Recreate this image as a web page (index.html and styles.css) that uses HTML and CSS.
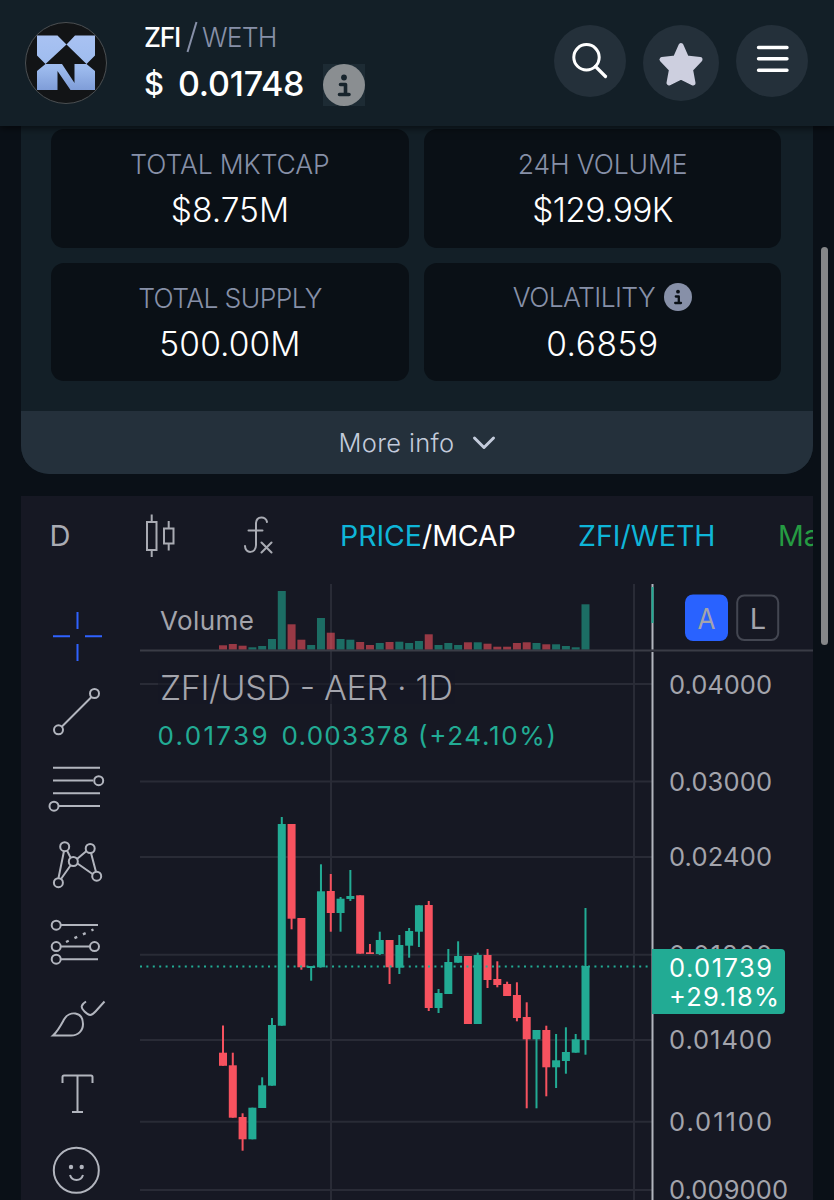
FILE: index.html
```html
<!DOCTYPE html>
<html lang="en">
<head>
<meta charset="utf-8">
<title>ZFI / WETH</title>
<link rel="stylesheet" href="styles.css">
</head>
<body>
<header class="header">
  <svg class="logo" viewBox="0 0 82 82">
    <defs><linearGradient id="lg" gradientUnits="userSpaceOnUse" x1="0" y1="13" x2="0" y2="68"><stop offset="0" stop-color="#a9c2f2"/><stop offset=".6" stop-color="#9dbbee"/><stop offset="1" stop-color="#7f9dd8"/></linearGradient></defs>
    <circle cx="41" cy="41" r="40.5" fill="#121416" stroke="#4b4f52"/>
    <path fill="url(#lg)" d="M12 13.500H32.500L41.500 22.500 20.500 42 12 33.500ZM70 13.500H50L41.500 22.500 61.500 42 70 33.500ZM12 68V49L20.500 42H37L49.500 61V42H61.500L70 49V68H45.500L32.500 49V68Z"/>
  </svg>
  <div class="pair">
    <div class="pair-name"><span class="base">ZFI</span><svg class="slash" viewBox="0 0 12 32"><path d="M10.500 1 1.500 31" stroke="#8790a8" stroke-width="2" fill="none"/></svg><span class="quote">WETH</span></div>
    <div class="pair-price"><span class="dollar">$</span><span class="amount">0.01748</span>
      <svg class="price-info" viewBox="0 0 42 42"><rect width="42" height="42" fill="#1d2b34"/><circle cx="21" cy="21" r="21" fill="#8a8e91"/><circle cx="21" cy="13.500" r="2.900" fill="#17242c"/><path d="M17.500 20.500H22.500V30M16.500 30.500H26" fill="none" stroke="#17242c" stroke-width="3.600" stroke-linecap="round" stroke-linejoin="round"/></svg>
    </div>
  </div>
  <nav class="actions">
    <button class="round"><svg viewBox="0 0 72 72"><circle cx="32.500" cy="32.300" r="12.700" fill="none" stroke="#fff" stroke-width="3"/><path d="M41.500 41.500 51.500 51.500" stroke="#fff" stroke-width="3.200" stroke-linecap="round"/></svg></button>
    <button class="round star"><svg viewBox="0 0 76 76"><path d="M38 20.500 43.500 33 57 34.500 47.500 44.500 50 58 38 52 26 58 28.500 44.500 19 34.500 32.500 33Z" fill="#cdcfdf" stroke="#cdcfdf" stroke-width="5" stroke-linejoin="round"/></svg></button>
    <button class="round"><svg viewBox="0 0 72 72"><path d="M22.500 22.500H51M22.500 33.800H51M22.500 45.200H51" stroke="#fff" stroke-width="3.400" stroke-linecap="round"/></svg></button>
  </nav>
</header>

<main class="content">
  <section class="card">
    <div class="stats">
      <div class="stat"><div class="label">TOTAL MKTCAP</div><div class="value">$8.75M</div></div>
      <div class="stat"><div class="label">24H VOLUME</div><div class="value v2">$129.99K</div></div>
      <div class="stat"><div class="label l3">TOTAL SUPPLY</div><div class="value v3">500.00M</div></div>
      <div class="stat"><div class="label l4">VOLATILITY<svg class="vol-info" viewBox="0 0 28 28"><circle cx="14" cy="14" r="14" fill="#8790a8"/><circle cx="14" cy="8.700" r="1.900" fill="#0a1016"/><path d="M11.800 13.500H14.800V19.500M11.200 20H17" fill="none" stroke="#0a1016" stroke-width="2.300" stroke-linecap="round" stroke-linejoin="round"/></svg></div><div class="value v4">0.6859</div></div>
    </div>
    <button class="more"><span>More info</span><svg viewBox="0 0 24 16"><path d="M2.500 3 12 12.500 21.500 3" fill="none" stroke="#c3cbdb" stroke-width="3" stroke-linecap="round" stroke-linejoin="round"/></svg></button>
  </section>

  <section class="chart">
    <div class="toolbar">
      <svg class="toolbar-icons" viewBox="21 496 300 88" fill="none" stroke="#a9abb3" stroke-width="2">
        <text class="ui" x="49.500" y="546" textLength="21" lengthAdjust="spacingAndGlyphs">D</text>
        <path d="M147 522H156.500V550H147ZM151.700 514.500V522M151.700 550V557M164 528.500H173.500V543.500H164ZM168.700 521V528.500M168.700 543.500V550.500"/>
        <path d="M267 522C266 516 256.500 515.500 256 523V545C256 554 245 554 245 546M248.500 530.500H262.500M261.500 542.500 271.500 552.500M271.500 542.500 261.500 552.500" stroke-linecap="round"/>
      </svg>
      <div class="links"><span class="mode"><b>PRICE</b>/MCAP</span><span class="market">ZFI/WETH</span><span class="maker">Ma</span></div>
    </div>
    <div class="workspace">
      <svg class="tools" viewBox="21 584 119 616" fill="none" stroke="#b2b5be" stroke-width="2">
        <path stroke="#2f62ff" d="M77.500 612V629M77.500 644V661M53 636.300H70M85 636.300H102"/>
        <path d="M61.500 727 91.500 697M53 767.800H100M53 780.600H93M53 793.300H100M59 806H100"/>
        <circle cx="94.500" cy="693.500" r="4.500"/><circle cx="58.500" cy="729.800" r="4.500"/>
        <circle cx="98.700" cy="780.700" r="4.500"/><circle cx="54" cy="806.200" r="4.500"/>
        <path d="M64 851 58.500 878M67 850.500 70.500 857.500M61 879 70.500 865.500M77 859 86.500 851M91 853 96 872M77.500 863.500 92.500 874"/>
        <circle cx="64.700" cy="846.700" r="4.500"/><circle cx="90.200" cy="848.500" r="4.500"/><circle cx="73.300" cy="861.500" r="4.500"/><circle cx="96.700" cy="876.200" r="4.500"/><circle cx="58.400" cy="882.700" r="4.500"/>
        <path d="M61 925H98M61 946.500H90M61 959.200H98"/>
        <path d="M66 942 93.500 929.500" stroke-width="2.400" stroke-dasharray="3 6.300"/>
        <circle cx="56.200" cy="925.200" r="4.500"/><circle cx="56.200" cy="946.600" r="4.500"/><circle cx="94.500" cy="946.600" r="4.500"/><circle cx="56.200" cy="959.200" r="4.500"/>
        <path d="M53 1035.500C58 1031 61 1025 64 1019.500 69 1010.500 83 1011 83 1024 83 1031 78 1035.500 71 1035.500ZM86 1001.500C80.500 1005 80.500 1008 84.500 1011.500 89 1016 91.500 1016 95.500 1011.500L104.500 1001.500"/>
        <path d="M62.500 1083V1077Q62.500 1075.500 64 1075.500H91Q92.500 1075.500 92.500 1077V1083M77.500 1076V1112M72 1112H83"/>
        <circle cx="76.300" cy="1170.300" r="22.500"/><circle cx="71" cy="1167" r="2.200" fill="#b2b5be" stroke="none"/><circle cx="81.700" cy="1167" r="2.200" fill="#b2b5be" stroke="none"/><path d="M70 1175C72 1181.500 81 1181.500 83 1175"/>
      </svg>
      <svg class="plot" viewBox="140 584 673 616">
        <path stroke="#292b36" stroke-width="2" d="M140 684H652M140 781.500H652M140 857H652M140 954.700H652M140 1040H652M140 1121.700H652M140 1190H652M331 584V1200M634 584V1200"/>
        <g id="volume" opacity=".58"></g>
        <path stroke="#3a3c46" stroke-width="2" d="M140 650.500H813"/>
        <g id="candles"></g>
        <path stroke="#22ab94" stroke-width="2" stroke-dasharray="2 4.400" d="M140 966.500H652"/>
        <path stroke="#b2b5be" stroke-width="2" d="M652.500 584V649.500M652.500 652V1200"/><path stroke="#22ab94" stroke-width="2" d="M652.500 587V623"/>
        <rect x="158" y="670" width="297" height="34" fill="#161823" opacity=".6"/>
        <g class="grey">
          <text x="160" y="630" font-size="26" textLength="94">Volume</text>
          <text x="160" y="700" font-size="34" textLength="293" class="title">ZFI/USD - AER · 1D</text>
          <text x="669" y="693.500" textLength="103">0.04000</text>
          <text x="669" y="791" textLength="103">0.03000</text>
          <text x="669" y="866" textLength="103">0.02400</text>
          <text x="669" y="964" textLength="103">0.01800</text>
          <text x="669" y="1049" textLength="103">0.01400</text>
          <text x="669" y="1131" textLength="103">0.01100</text>
          <text x="669" y="1199" textLength="119">0.009000</text>
        </g>
        <g class="green"><text x="157.500" y="745" textLength="110">0.01739</text><text x="281.500" y="745" textLength="127">0.003378</text><text x="418" y="745" textLength="138">(+24.10%)</text></g>
        <path fill="#22ab94" d="M652 949H781Q785 949 785 953V1010Q785 1014 781 1014H652Z"/>
        <g class="tag"><text x="669" y="976.500" textLength="103">0.01739</text><text x="669" y="1006" textLength="110">+29.18%</text></g>
        <rect x="685" y="594.500" width="43" height="46.500" rx="8" fill="#2962ff"/><rect x="737.200" y="595.500" width="41" height="44.500" rx="7" fill="none" stroke="#434651" stroke-width="2"/>
        <g class="grey"><text x="706.500" y="628.500" font-size="29" text-anchor="middle" textLength="18" lengthAdjust="spacingAndGlyphs">A</text><text x="758" y="628.500" font-size="29" text-anchor="middle">L</text></g>
      </svg>
    </div>
  </section>
</main>
<div class="scrollbar"></div>
<script src="chart.js"></script>
</body>
</html>
```
FILE: styles.css
```css
* { box-sizing: border-box; }
html, body { margin: 0; }
body { width: 834px; height: 1200px; overflow: hidden; background: #0a1017; font-family: Inter, "Liberation Sans", sans-serif; color: #fff; }
button { border: 0; padding: 0; font: inherit; color: inherit; }
svg { display: block; }
.header { position: relative; height: 126px; background: #131f27; display: flex; align-items: flex-start; padding: 0 26px 0 25px; box-shadow: 0 2px 8px rgba(0,0,0,.6); }
.logo { width: 82px; height: 82px; margin-top: 22px; flex: none; }
.pair { margin-left: 37px; padding-top: 20px; flex: 1; }
.pair-name { display: flex; align-items: center; height: 34px; font-size: 26.500px; }
.base { font-weight: 500; width: 42px; letter-spacing: -1.3px; }
.slash { width: 12px; height: 32px; }
.quote { color: #8790a8; font-weight: 300; margin-left: 4px; letter-spacing: -.8px; }
.pair-price { display: flex; align-items: center; height: 58px; font-size: 34px; font-weight: 500; }
.dollar { width: 34px; font-size: 31px; }
.amount { width: 145px; letter-spacing: -.2px; font-weight: 450; }
.price-info { width: 42px; height: 42px; margin-top: 4px; }
.actions { display: flex; gap: 17px; padding-top: 25px; }
.round { width: 72px; height: 72px; border-radius: 50%; background: #24303a; }
.star { width: 76px; height: 76px; }
.content { margin: 0 21px; }
.card { background: #131f27; height: 348px; border-radius: 0 0 28px 28px; overflow: hidden; }
.stats { height: 285px; padding: 3px 32px 0 30px; display: grid; grid-template-columns: 358px 357px; grid-template-rows: 119px 118px; gap: 15px; }
.stat { background: #0a1016; border-radius: 13px; text-align: center; padding-top: 17px; }
.label { height: 36px; line-height: 36px; font-size: 26.500px; font-weight: 300; color: #8790a8; display: flex; justify-content: center; align-items: center; letter-spacing: -.1px; }
.l3 { letter-spacing: -.6px; }
.l4 { letter-spacing: -.6px; margin-top: -1px; margin-bottom: 1px; }
.value { height: 57px; line-height: 57px; font-size: 33.500px; font-weight: 350; }
.v2 { letter-spacing: -.6px; }
.v3 { letter-spacing: .1px; }
.v4 { letter-spacing: .6px; }
.vol-info { width: 28px; height: 28px; margin-left: 9px; }
.more { width: 100%; height: 63px; background: #24303b; color: #c3cbdb; display: flex; align-items: center; justify-content: center; font-size: 25.500px; font-weight: 350; letter-spacing: .35px; gap: 17px; }
.more svg { width: 24px; height: 16px; }
.chart { margin-top: 22px; height: 704px; background: #161823; overflow: hidden; }
.toolbar { display: flex; height: 88px; }
.toolbar-icons { width: 300px; height: 88px; flex: none; }
.ui { font-size: 29px; fill: #a9abb3; stroke: none; }
.links { display: flex; align-items: center; height: 79px; margin-left: 19px; font-size: 28.500px; font-weight: 400; white-space: nowrap; }
.mode { width: 238px; letter-spacing: -.05px; }
.mode b { font-weight: 400; color: #0fb5d8; }
.market { width: 200px; color: #0fb5d8; }
.maker { color: #259b42; }
.workspace { display: flex; }
.tools { width: 119px; height: 616px; flex: none; }
.plot { width: 673px; height: 616px; font-size: 25.500px; flex: none; }
.grey { fill: #a3a4ac; }
.title { font-weight: 350; }
.green { fill: #22ab94; font-size: 26px; }
.tag { fill: #fff; }
.scrollbar { position: absolute; left: 821px; top: 247px; width: 7px; height: 398px; border-radius: 4px; background: #858688; }
```
FILE: chart.js
```js
// direction, high, body top, body bottom, low, volume top
const bars = [
  ['r',1025.5,1052.7,1065.8,1065.8,645.3],['r',1052.7,1065.3,1117.7,1117.7,644],['r',1113.3,1117,1139.3,1150.7,645.7],
  ['g',1107.7,1107.7,1139.3,1139.3,647.3],['g',1077.3,1085.3,1108,1108,646],['g',1018,1025,1085.7,1085.7,639],
  ['g',817,824,1025.7,1025.7,591],['r',824,824,918.7,929.3,624.3],['r',918,918,967.3,969.7,639.7],
  ['g',966,966,968,980.7,645],['g',864.3,891.3,967.3,967.3,618],['r',874,891,913,931.7,632.7],
  ['g',897,898.7,913,931.7,639],['g',870,896,899,901,639.7],['r',895.3,895.3,953.7,953.7,642],
  ['r',944,952.3,954,954,645],['g',931.7,940,954,955,643],['r',940,940,967.3,984,642],
  ['g',935,945,967.7,974,641.7],['g',928,931,945.7,957.7,643],['g',905.3,905.3,931.7,947,641],
  ['r',901,905,1008,1011,634.3],['g',989,993,1008,1013,645],['g',949,962,994,994,643],
  ['g',941.3,956,962.7,962.7,645],['r',956,956,1024,1024,642.3],['g',952.7,955,1024,1024,642.3],
  ['r',949,955,980,988,643.7],['r',961.3,979,985,987.3,646.7],['r',981.7,984,996,996,646.7],
  ['r',982.3,995,1018,1021.3,643],['r',1002.3,1017,1039.3,1108.3,642.3],['g',1030,1030,1039.3,1108.3,643],
  ['r',1025.7,1030,1067.3,1096.3,644.3],['g',1034,1060.3,1067.3,1088,644.3],['g',1027.3,1052,1061,1073.7,646],
  ['g',1034,1039.3,1052.7,1052.7,647.3],['g',908,966,1040,1054.7,604.3]
];
const rect = (x, top, width, bottom, fill) =>
  `<rect x="${x}" y="${top}" width="${width}" height="${bottom - top}" fill="${fill}"/>`;
let candles = '', volume = '';
bars.forEach(([dir, high, top, bottom, low, vol], i) => {
  const x = 223 + i * 9.797;
  const color = dir === 'g' ? '#22ab94' : '#f7525f';
  candles += rect(x - 1, high, 2, low, color) + rect(x - 4, top, 8, bottom, color);
  volume += rect(x - 4, vol, 8, 649.7, color);
});
document.getElementById('candles').innerHTML = candles;
document.getElementById('volume').innerHTML = volume;
```
